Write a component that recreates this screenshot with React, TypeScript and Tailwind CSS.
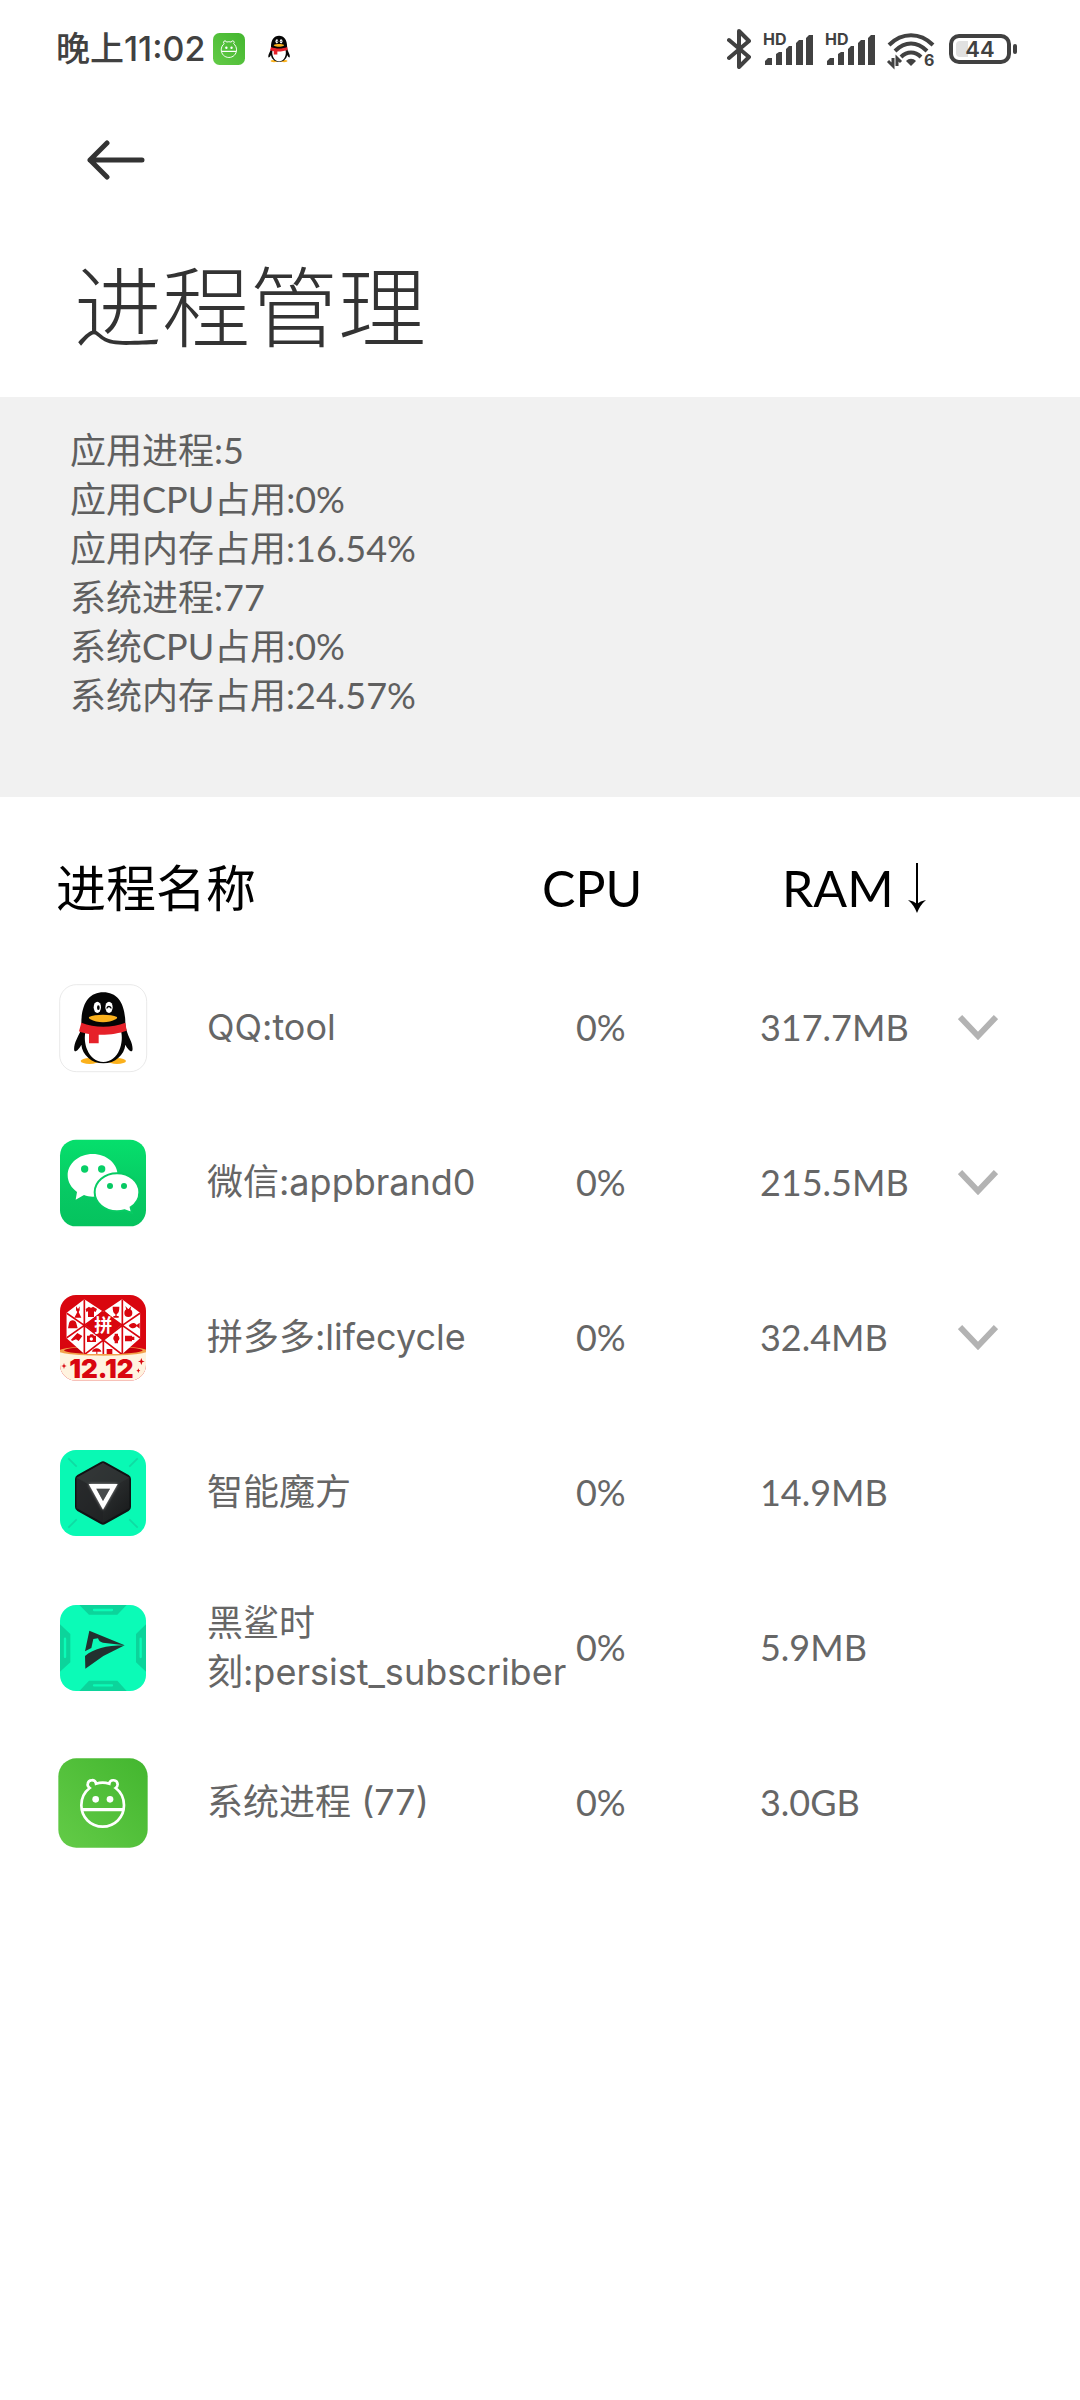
import React from 'react';

const summary = [
    '应用进程:5',
    '应用CPU占用:0%',
    '应用内存占用:16.54%',
    '系统进程:77',
    '系统CPU占用:0%',
    '系统内存占用:24.57%',
];

const QQPenguin: React.FC = () => (
    <>
        <ellipse cx="119" cy="273" rx="27" ry="9" fill="#fbb11c" />
        <ellipse cx="201" cy="273" rx="27" ry="9" fill="#fbb11c" />
        <path d="M94 160C94 100 118 67 160 67s66 33 66 93c0 14 6 30 14 48 8 16 10 34 5 36-5 1-14-10-19-20-3 30-30 56-66 56s-63-26-66-56c-5 10-14 21-19 20-5-2-3-20 5-36 8-18 19-34 14-48z" fill="#050505" />
        <path d="M108 180h104c6 18 4 42-4 60-8 20-26 36-48 36s-40-16-48-36c-8-18-10-42-4-60z" fill="#fff" />
        <path d="M94 158c40 16 92 16 132 0l4 24c-22 8-54 13-84 12v26h-29v-28c-12-2-22-4-30-8z" fill="#e62129" />
        <ellipse cx="142" cy="112" rx="11" ry="17" fill="#fff" />
        <ellipse cx="177" cy="112" rx="11" ry="17" fill="#fff" />
        <ellipse cx="145" cy="113" rx="4" ry="7" fill="#050505" />
        <path d="M171 114c2-6 9-6 12 0" stroke="#050505" strokeWidth="4" fill="none" strokeLinecap="round" />
        <path d="M117 141c18-9 66-9 84 0 1 3-1 5-4 7-20 12-56 12-76 0-3-2-5-4-4-7z" fill="#fbb11c" />
    </>
);

const QQIcon: React.FC = () => (
    <svg viewBox="24 39 270 270" className="size-full">
        <rect x="29" y="44" width="261" height="261" rx="50" fill="#fff" stroke="#dedede" strokeWidth="2" />
        <QQPenguin />
    </svg>
);

const WeChatIcon: React.FC = () => (
    <svg viewBox="24 23 270 270" className="size-full">
        <defs>
            <linearGradient id="wechat" x1="0" y1="0" x2="0" y2="1">
                <stop offset="0" stopColor="#06df6c" />
                <stop offset="0.6" stopColor="#07c963" />
                <stop offset="1" stopColor="#05c35e" />
            </linearGradient>
        </defs>
        <rect x="30" y="28" width="258" height="260" rx="48" fill="url(#wechat)" />
        <path d="M128 71c-42 0-75 29-75 64 0 20 11 38 28 50l-4 23 25-14c8 3 17 5 26 5 42 0 75-29 75-64s-33-64-75-64z" fill="#fff" />
        <path d="M201 129c-37 0-67 25-67 57s30 57 67 57c8 0 16-1 23-3l22 8-4-17c16-10 26-27 26-45 0-32-30-57-67-57z" fill="#fff" stroke="#07cb63" strokeWidth="6" />
        <circle cx="104" cy="116" r="11" fill="#07cf66" />
        <circle cx="155" cy="116" r="11" fill="#07cf66" />
        <circle cx="180" cy="167" r="9" fill="#07c963" />
        <circle cx="222" cy="167" r="9" fill="#07c963" />
    </svg>
);

const PinduoduoIcon: React.FC = () => (
    <svg viewBox="24 27 270 270" className="size-full overflow-visible">
        <defs>
            <clipPath id="pdd">
                <rect x="30" y="33" width="258" height="257" rx="48" />
            </clipPath>
            <clipPath id="pdd-heart">
                <path d="M103 46 160 83l56-37 55 41v75l-54 48H103l-54-48V87z" />
            </clipPath>
        </defs>
        <g clipPath="url(#pdd)">
            <rect x="30" y="33" width="258" height="257" fill="#d9060f" />
            <ellipse cx="160" cy="202" rx="135" ry="16" fill="#f3a04a" />
            <ellipse cx="160" cy="199" rx="118" ry="11" fill="#c5000a" />
            <path d="M30 205c30 8 80 10 130 10s100-2 128-10v85H30z" fill="#fff3df" />
            <g clipPath="url(#pdd-heart)">
                <rect x="45" y="40" width="230" height="172" fill="#fff" />
                <path d="M103 40v174M217 40v174M49 87l54 37 114 88M271 87l-54 37-114 88M49 162l54-38 57-41M271 162l-54-38-57-41M160 165v50" stroke="#d9060f" strokeWidth="5" fill="none" />
                <path d="M160 77 214 124l-54 46-54-46z" fill="#d9060f" />
            </g>
            <g fill="#d9060f">
                <path d="M78 67v12l4 5-9 17h21l-8-17 3-5V67l-5 8z" />
                <path d="m107 75 10-7c4 4 8 4 12 0l12 7-4 9-5-2v17h-18V82l-5 2z" />
                <path d="M188 68h20c0 12-2 20-8 22v6h6v5h-16v-5h6v-6c-6-2-8-10-8-22z" />
                <circle cx="235" cy="87" r="12" />
                <path d="M226 66l9 10 9-10-3 12h-12z" />
                <path d="M57 118c2-12 20-12 22 0l4 15H54z" />
                <path d="M236 125c8-10 18-10 24-2l9-7v18l-9-7c-6 8-16 8-24-2z" />
                <path d="m82 147 15 9-11 15-8-5-12 5-3-4z" />
                <path d="M111 155h7l3-4h8l3 4h6v19h-27z" />
                <circle cx="199" cy="163" r="9" />
                <path d="M194 149h10v29h-10zM225 155h21v17h-21zM246 158h7v10h-7z" />
                <path d="M126 203c2-14 26-14 28 0h-12v7h-3v-7zM170 195h17v15h-17z" />
            </g>
            <circle cx="124" cy="165" r="5" fill="#fff" />
            <path d="m42 237 2 7 6 2-6 2-2 7-2-7-6-2 6-2zM274 222l3 8 7 2-7 3-3 8-3-8-7-3 7-2zM265 253l2 5 4 2-4 2-2 5-2-5-4-2 4-2z" fill="#d9060f" />
        </g>
        <text x="160" y="144" textAnchor="middle" fontSize="54" fontWeight="700" fontFamily="Noto Sans CJK SC, sans-serif" fill="#fff">拼</text>
        <text x="154" y="283" textAnchor="middle" fontSize="78" fontWeight="900" fontFamily="Inter, sans-serif" fill="#d9060f">12.12</text>
    </svg>
);

const CubeIcon: React.FC = () => (
    <svg viewBox="24 24 270 270" className="size-full">
        <defs>
            <linearGradient id="cube" x1="0" y1="0" x2="1" y2="1">
                <stop offset="0" stopColor="#3a3d3e" />
                <stop offset="0.5" stopColor="#2b2e2f" />
                <stop offset="1" stopColor="#161819" />
            </linearGradient>
            <filter id="glow" x="-30%" y="-30%" width="160%" height="160%">
                <feGaussianBlur stdDeviation="5" />
            </filter>
        </defs>
        <rect x="30" y="30" width="258" height="258" rx="48" fill="#09f9b4" />
        <path d="m55 55 25 25M263 55l-25 25M55 263l25-25M263 263l-25-25" stroke="#0fdba3" strokeWidth="5" />
        <path d="M152 66q7-4 14 0l70 39q7 4 7 12v84q0 8-7 12l-70 39q-7 4-14 0l-70-39q-7-4-7-12v-84q0-8 7-12z" fill="#101314" />
        <path d="m159 69 79 44v91l-79 44-79-44v-91z" fill="url(#cube)" />
        <path d="m80 113 79 45 79-45-79-44z" fill="#313536" opacity="0.6" />
        <path d="M159 158v90l-79-44v-91z" fill="#1f2223" opacity="0.6" />
        <path d="M116 132h87l-44 77z" fill="#fff" opacity="0.55" filter="url(#glow)" />
        <path d="M116 132h87l-44 77zM139 146l20 37 21-37z" fill="#fff" fillRule="evenodd" />
        <path d="M139 146l20 37 21-37z" fill="#484b4c" />
    </svg>
);

const SharkIcon: React.FC = () => (
    <svg viewBox="24 24 270 270" className="size-full">
        <defs>
            <clipPath id="shark">
                <rect x="30" y="30" width="258" height="258" rx="48" />
            </clipPath>
        </defs>
        <g clipPath="url(#shark)">
            <rect x="30" y="30" width="258" height="258" fill="#0bfbb7" />
            <path d="M88 30h142l-28 29h-85zM88 288h142l-28-31h-85zM30 88v142l31-28v-85zM288 88v142l-30-28v-85z" fill="#0cd49b" />
            <path d="M132 45h54M132 271h54M45 131v55M272 131v55" stroke="#0bfbb7" strokeWidth="7" strokeLinecap="round" />
        </g>
        <path d="m118 107 106 44-65-8c-8-1-13-6-15-13l-14 2-6 27-19 10z" fill="#22302f" />
        <path d="M105 183c28-22 60-31 119-32l-64 32-54 38z" fill="#22302f" />
    </svg>
);

const SystemFace: React.FC = () => (
    <>
        <rect x="25" y="25" width="268" height="268" rx="54" fill="url(#system)" />
        <g fill="none" stroke="#fff" strokeWidth="8">
            <path d="M138 101c13-4 27-4 40 0 2-15 24-13 25 2 0 6-3 9-6 11 17 13 25 32 25 52 0 36-28 64-64 64s-64-28-64-64c0-20 8-39 25-52-4-3-7-7-6-12 2-15 23-15 25-1z" />
            <path d="M95 179h126" strokeWidth="10" />
        </g>
        <circle cx="137" cy="148" r="10" fill="#fff" />
        <circle cx="180" cy="148" r="10" fill="#fff" />
    </>
);

const SystemIcon: React.FC = () => (
    <svg viewBox="24 24 270 270" className="size-full">
        <defs>
            <linearGradient id="system" x1="1" y1="0" x2="0" y2="1">
                <stop offset="0" stopColor="#43b62f" />
                <stop offset="1" stopColor="#63cb47" />
            </linearGradient>
        </defs>
        <SystemFace />
    </svg>
);

const SignalIcon: React.FC = () => (
    <svg viewBox="0 0 50 36" className="h-9 w-[50px] overflow-visible" fill="#414141">
        <text x="0" y="14" fontSize="16" fontWeight="700" fontFamily="Inter, sans-serif">HD</text>
        <path d="M2 34v-4l3-3h4v7zM13 34V23l3-2h3v13zM23 34V18l3-3h3v19zM33 34V12l3-3h4v25zM43 34V7l3-3h4v30z" />
    </svg>
);

const WifiIcon: React.FC = () => (
    <svg viewBox="0 0 50 36" className="h-9 w-[50px] overflow-visible">
        <g fill="none" stroke="#414141" strokeWidth="4">
            <path d="M2 14c13-13 31-13 44 0" />
            <path d="M8 20c10-10 22-10 32 0" />
            <path d="M14 26c6-6 14-6 20 0" />
        </g>
        <path d="M19 30c3-3 7-3 10 0l-5 5z" fill="#414141" />
        <path d="M1 30l5 5v-8M14 31l-4-4v8" fill="none" stroke="#414141" strokeWidth="3" />
        <text x="37" y="35" fontSize="16" fontWeight="700" fontFamily="Inter, sans-serif" fill="#414141">6</text>
    </svg>
);

const StatusBar: React.FC = () => (
    <div className="flex h-[98px] items-center justify-between pl-14 pr-[63px] font-['Inter','Noto_Sans_CJK_SC',sans-serif] text-[#414141]">
        <div className="flex items-center">
            <span className="text-[34px] font-medium leading-10">晚上11:02</span>
            <div className="ml-2 size-8">
                <svg viewBox="25 25 268 268" className="size-full">
                    <SystemFace />
                </svg>
            </div>
            <svg viewBox="29 44 261 261" className="ml-[18px] size-8">
                <QQPenguin />
            </svg>
        </div>
        <div className="flex items-center gap-3">
            <svg viewBox="0 0 24 40" className="h-10 w-6" fill="none" stroke="#414141" strokeWidth="4" strokeLinejoin="round" strokeLinecap="round">
                <path d="M2 11l20 17-10 10V2l10 10L2 29" />
            </svg>
            <SignalIcon />
            <SignalIcon />
            <WifiIcon />
            <div className="flex items-center gap-[2px]">
                <div className="relative flex h-[30px] w-[62px] items-center justify-center rounded-[10px] border-4 border-[#414141]">
                    <div className="absolute left-[3px] top-[3px] h-4 w-3 rounded-l-sm bg-[#e1e1e1]" />
                    <span className="relative text-[22px] font-semibold leading-none">44</span>
                </div>
                <div className="h-[10px] w-1 rounded-sm bg-[#414141]" />
            </div>
        </div>
    </div>
);

interface ProcessInfo {
    name: string;
    cpu: string;
    ram: string;
    icon: React.FC;
    expandable?: boolean;
}

const processes: ProcessInfo[] = [
    { name: 'QQ:tool', cpu: '0%', ram: '317.7MB', icon: QQIcon, expandable: true },
    { name: '微信:appbrand0', cpu: '0%', ram: '215.5MB', icon: WeChatIcon, expandable: true },
    { name: '拼多多:lifecycle', cpu: '0%', ram: '32.4MB', icon: PinduoduoIcon, expandable: true },
    { name: '智能魔方', cpu: '0%', ram: '14.9MB', icon: CubeIcon },
    { name: '黑鲨时刻:persist_subscriber', cpu: '0%', ram: '5.9MB', icon: SharkIcon },
    { name: '系统进程 (77)', cpu: '0%', ram: '3.0GB', icon: SystemIcon },
];

const ProcessRow: React.FC<{ process: ProcessInfo }> = ({ process }) => {
    const Icon = process.icon;
    return (
        <tr className="h-[155px]">
            <td className="pl-[58px]">
                <div className="size-[90px]">
                    <Icon />
                </div>
            </td>
            <td className="font-['Inter','Noto_Sans_CJK_SC',sans-serif]">{process.name}</td>
            <td className="pl-9">{process.cpu}</td>
            <td>{process.ram}</td>
            <td>
                {process.expandable && (
                    <button type="button" aria-label="展开" className="flex h-16 w-[76px] items-center justify-center">
                        <svg viewBox="0 0 40 28" className="h-7 w-10" fill="none" stroke="#b3b3b3" strokeWidth="6">
                            <path d="m2 3 18 19L38 3" />
                        </svg>
                    </button>
                )}
            </td>
        </tr>
    );
};

export default function App() {
    return (
        <div className="min-h-screen bg-white font-['Lato','Noto_Sans_CJK_SC',sans-serif]">
            <StatusBar />
            <header className="px-[74px]">
                <button type="button" aria-label="返回" className="flex h-[124px] w-[84px] items-center justify-center">
                    <svg viewBox="0 0 58 40" className="h-10 w-[58px]" fill="none" stroke="#333" strokeWidth="5" strokeLinecap="round" strokeLinejoin="round">
                        <path d="M55 20H3M20 3 3 20l17 17" />
                    </svg>
                </button>
                <h1 className="h-[175px] pt-5 text-[88px] font-light leading-[128px] text-[#333]">进程管理</h1>
            </header>

            <ul className="bg-[#f1f1f1] px-[70px] pb-[77px] pt-[29px] text-[36px] leading-[49px] text-[#5f5f5f]">
                {summary.map((line) => (
                    <li key={line}>{line}</li>
                ))}
            </ul>

            <table className="w-full table-fixed text-left text-[36px] leading-[49px] text-[#666]">
                <colgroup>
                    <col className="w-[207px]" />
                    <col />
                    <col className="w-[220px]" />
                    <col className="w-[180px]" />
                    <col className="w-[140px]" />
                </colgroup>
                <thead>
                    <tr className="h-[153px] text-[50px] leading-[72px] text-black">
                        <th scope="col" colSpan={2} className="pl-14 pt-7 font-normal">进程名称</th>
                        <th scope="col" className="pl-[2px] pt-7 font-normal">CPU</th>
                        <th scope="col" colSpan={2} className="pl-[22px] pt-7 font-normal">
                            <button type="button" className="flex items-center gap-[14px]">
                                RAM
                                <svg viewBox="0 0 18 50" className="h-[50px] w-[18px]">
                                    <path d="M9 0v44" stroke="#000" strokeWidth="2" />
                                    <path d="M0 37q6 1 9 4 3-3 9-4-6 5-9 13-3-8-9-13z" fill="#000" />
                                </svg>
                            </button>
                        </th>
                    </tr>
                </thead>
                <tbody>
                    {processes.map((process) => (
                        <ProcessRow key={process.name} process={process} />
                    ))}
                </tbody>
            </table>
        </div>
    );
}
